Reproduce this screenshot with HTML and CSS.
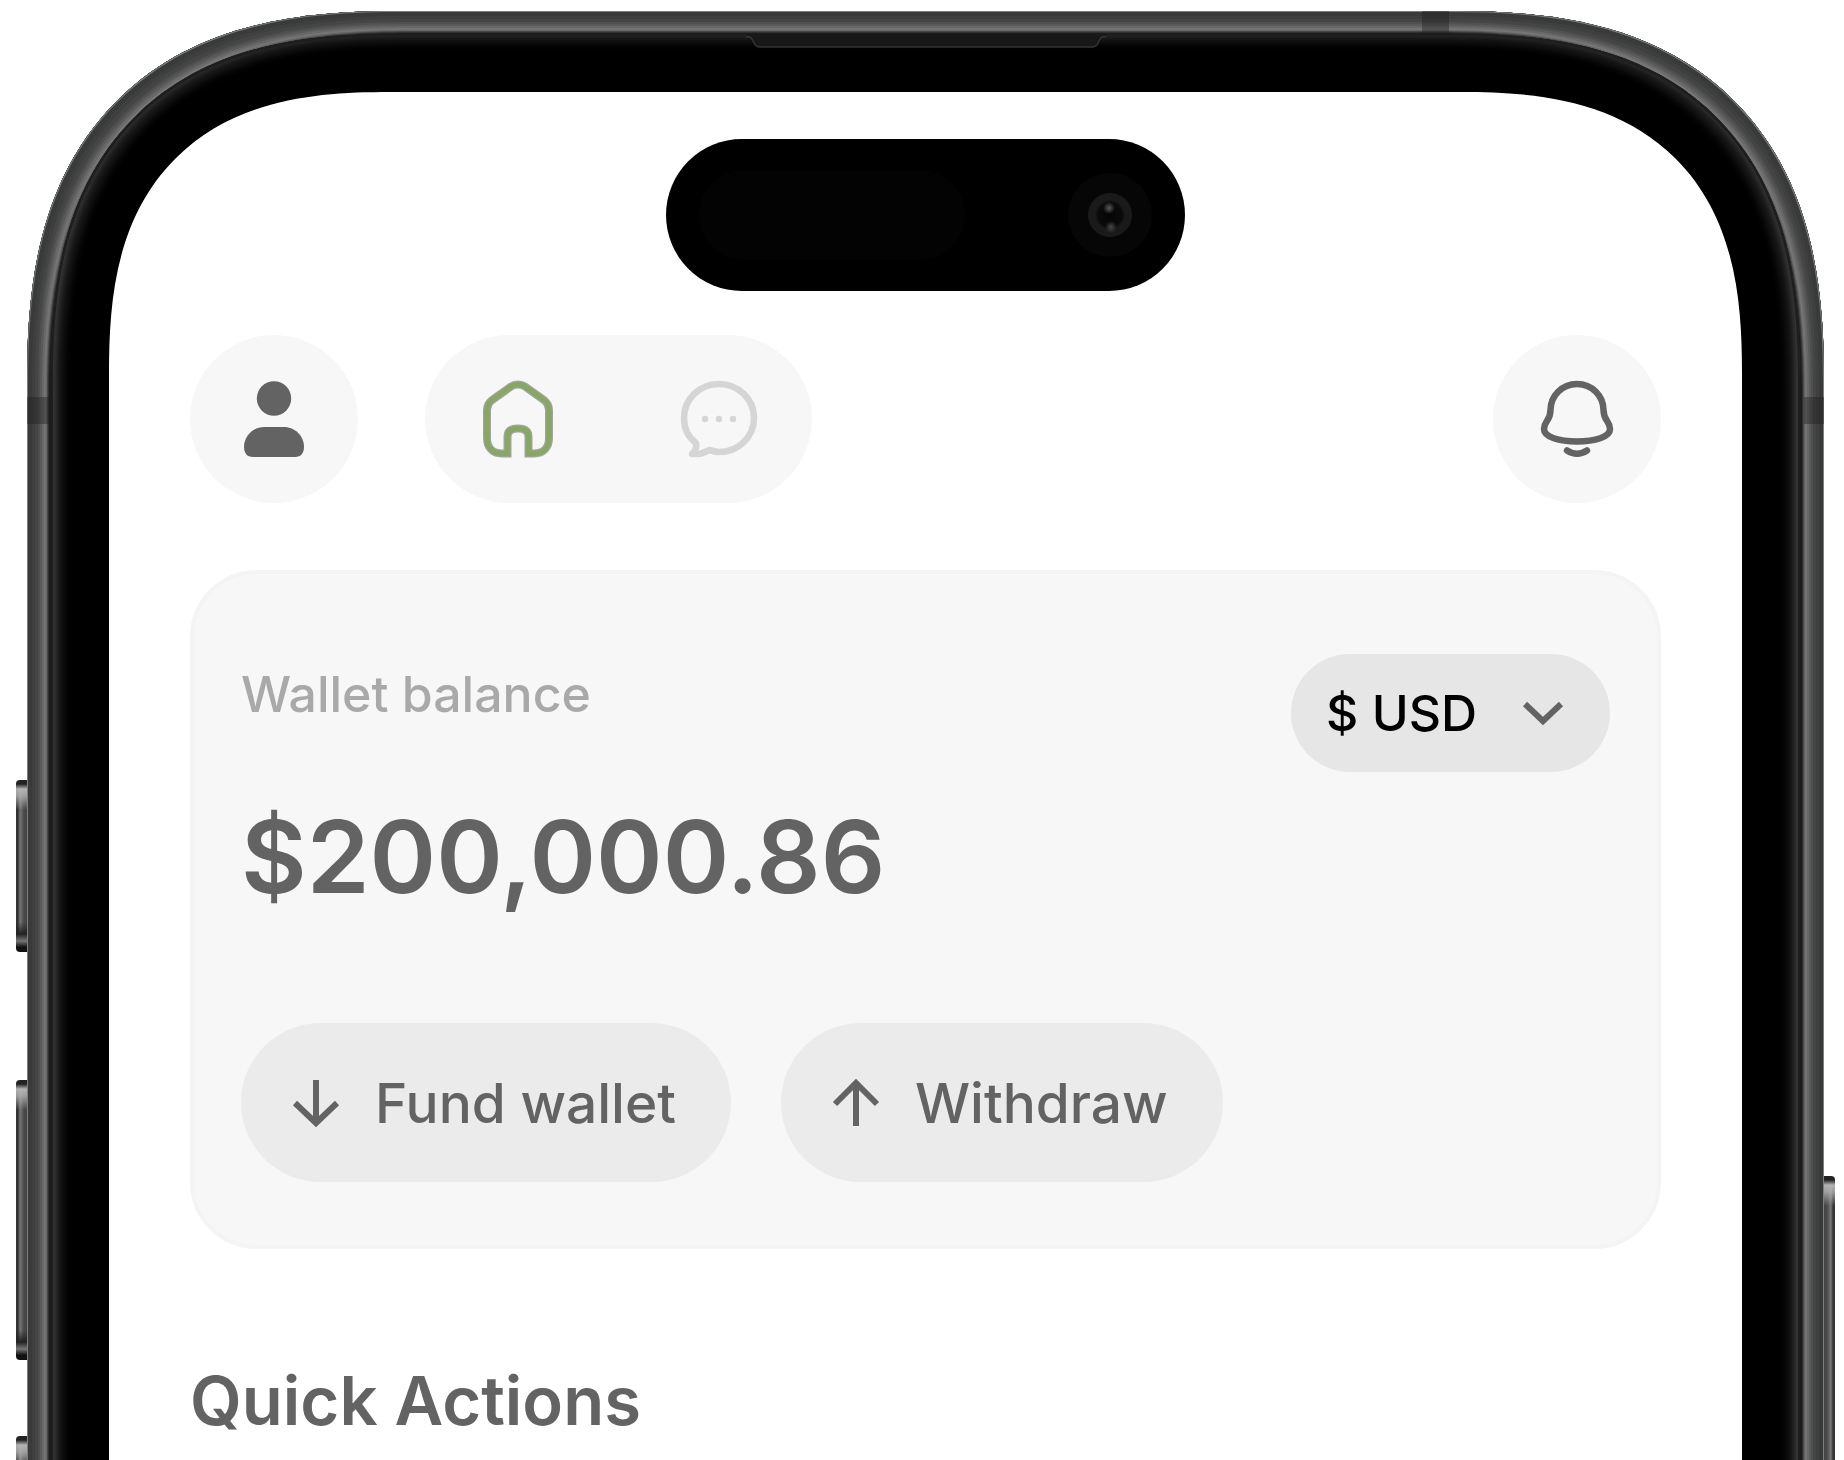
FILE: index.html
```html
<!DOCTYPE html>
<html lang="en">
<head>
  <meta charset="utf-8">
  <meta name="viewport" content="width=device-width, initial-scale=1">
  <title>Wallet</title>
  <link rel="stylesheet" href="styles.css">
</head>
<body>
  <div class="stage">
    <div class="phone">
      <span class="side-key key-action"></span>
      <span class="side-key key-volume-up"></span>
      <span class="side-key key-volume-down"></span>
      <span class="side-key key-power"></span>
      <div class="frame">
        <span class="band band-top"></span>
        <span class="band band-left"></span>
        <span class="band band-right"></span>
        <div class="bezel">
          <svg class="earpiece" viewBox="0 0 360 14" aria-hidden="true">
            <path d="M0 0H360V2C354 2 354 5 352 9Q350 13 346 13H14Q10 13 8 9C6 5 6 2 0 2Z" fill="#181818"/>
            <path d="M0 2.500C6 2.500 6 5 8 9Q10 13 14 13H346Q350 13 352 9C354 5 354 2.500 360 2.500" fill="none" stroke="#343434" stroke-width="1.500"/>
          </svg>
          <div class="screen">
            <div class="island">
              <span class="sensor"></span>
              <span class="camera"><span class="lens"></span></span>
            </div>
            <header class="topbar">
              <button class="round" type="button" aria-label="Profile">
                <svg class="icon" viewBox="0 0 80 80" fill="#636363">
                  <circle cx="40" cy="19.500" r="17.200"/>
                  <path d="M10 68C10 57 19 48 30 48H50C61 48 70 57 70 68C70 74 67 78 61 78H19C13 78 10 74 10 68Z"/>
                </svg>
              </button>
              <nav class="tabs" aria-label="Main">
                <a href="#home" aria-label="Home" aria-current="page">
                  <svg class="icon" viewBox="0 0 80 80" fill="none">
                    <path stroke="#a3a3a3" stroke-width="8" d="M29.500 74.500H24C15 74.500 9 69 9 59V31C9 27 10.500 24 13.500 21.500L33 7.500C37 4.700 43 4.700 47 7.500L66.500 21.500C69.500 24 71 27 71 31V59C71 69 65 74.500 56 74.500H50.500V58C50.500 52 47 49.500 40 49.500C33 49.500 29.500 52 29.500 58Z"/>
                    <path stroke="#87a862" stroke-width="5.500" d="M29.500 74.500H24C15 74.500 9 69 9 59V31C9 27 10.500 24 13.500 21.500L33 7.500C37 4.700 43 4.700 47 7.500L66.500 21.500C69.500 24 71 27 71 31V59C71 69 65 74.500 56 74.500H50.500V58C50.500 52 47 49.500 40 49.500C33 49.500 29.500 52 29.500 58Z"/>
                  </svg>
                </a>
                <a href="#messages" aria-label="Messages">
                  <svg class="icon" viewBox="0 0 80 80" fill="none">
                    <path stroke="#d5d5d5" stroke-width="6.500" stroke-linejoin="round" d="M40 5C59.500 5 75 20 75 39C75 58 59.500 73 40 73C36.500 73 34 72 31 71C27 72 24 75 19 75H13C16 72 18 68 17 64C9 58 5 49 5 39C5 20 20.500 5 40 5Z"/>
                    <g fill="#d5d5d5"><circle cx="26" cy="40" r="3.200"/><circle cx="40" cy="40" r="3.200"/><circle cx="54" cy="40" r="3.200"/></g>
                  </svg>
                </a>
              </nav>
              <button class="round alerts" type="button" aria-label="Notifications">
                <svg class="icon" viewBox="0 0 80 80" fill="none" stroke="#636363" stroke-width="6.500" stroke-linecap="round">
                  <path d="M40 5C25 5 13.500 17 13.500 31C13.500 42 7 42 7 50C7 58 22 62.500 40 62.500C58 62.500 73 58 73 50C73 42 66.500 42 66.500 31C66.500 17 55 5 40 5Z"/>
                  <path d="M30 71.500Q40 78 50 71.500"/>
                </svg>
              </button>
            </header>
            <main>
              <section class="card">
                <div class="card-top">
                  <div class="balance">
                    <p class="label">Wallet balance</p>
                    <p class="amount">$200,000.86</p>
                  </div>
                  <div class="currency">
                    <select aria-label="Currency"><option>$ USD</option></select>
                    <svg class="chevron" viewBox="0 0 46 30" fill="none" stroke="#636363" stroke-width="6" aria-hidden="true"><path d="M5 5L23 22L41 5"/></svg>
                  </div>
                </div>
                <div class="actions">
                  <button class="pill" type="button">
                    <svg class="arrow" viewBox="0 0 50 50" aria-hidden="true"><path d="M25 2V45M4 25L25 45L46 25"/></svg>
                    Fund wallet
                  </button>
                  <button class="pill" type="button">
                    <svg class="arrow" viewBox="0 0 50 50" aria-hidden="true"><path d="M25 48V5M4 26L25 5L46 26"/></svg>
                    Withdraw
                  </button>
                </div>
              </section>
              <h2 class="heading">Quick Actions</h2>
            </main>
          </div>
        </div>
      </div>
    </div>
  </div>
</body>
</html>
```
FILE: styles.css
```css
* { box-sizing: border-box; }

body {
  margin: 0;
  background: #fff;
  color: #636363;
  font-family: Inter, "Liberation Sans", sans-serif;
}

button, select { font: inherit; color: inherit; border: 0; }
p, h2 { margin: 0; }
svg { display: block; flex: none; }

/* The device runs on past the lower edge of the window. */
.stage {
  display: flex;
  flex-direction: column;
  min-height: 100vh;
  padding: 11px 20px 0 27px;
  overflow: hidden;
}

.phone {
  position: relative;
  display: flex;
  flex: 1 0 auto;
  flex-direction: column;
  margin-bottom: -120px;
}

.frame, .bezel, .screen { display: flex; flex: 1 0 auto; flex-direction: column; }

/* Metal rim, shaded ring by ring from the outside in */
.frame {
  position: relative;
  padding: 23px 24px 0;
  border-radius: 307px 307px 0 0;
  overflow: hidden;
  background: #1c1c1c;
  box-shadow:
    inset 0 0 0 1px #7c7d7d,
    inset 0 0 0 5px #393a3a,
    inset 0 0 0 8px #3e3f3f,
    inset 0 0 0 11px #454545,
    inset 0 0 0 13px #4f4f4f,
    inset 0 0 0 15px #5a5a5a,
    inset 0 0 0 17px #686868,
    inset 0 0 0 19px #747474,
    inset 0 0 0 20px #646464,
    inset 0 0 0 21px #484848,
    inset 0 0 0 22px #303030;
}

.bezel {
  position: relative;
  padding: 58px 58px 0;
  border-radius: 284px 284px 0 0;
  background: #000;
  box-shadow:
    inset 0 0 0 2px #1e1e1e,
    inset 0 -4px 5px 5px #373838,
    inset 0 -4px 8px 12px #1c1c1c;
}

.screen {
  padding: 47px 81px 160px;
  border-radius: 226px 226px 0 0;
  background: #fff;
}

@supports (corner-shape: superellipse(1.3)) {
  .frame { border-radius: 373px 373px 0 0; corner-shape: superellipse(1.33); }
  .bezel { border-radius: 346px 346px 0 0; corner-shape: superellipse(1.33); }
  .screen { border-radius: 281px 281px 0 0; corner-shape: superellipse(1.36); }
}

.band { position: absolute; background: rgba(30, 30, 30, 0.4); }
.band-top { top: 0; right: 375px; width: 27px; height: 23px; }
.band-left { top: 386px; left: 0; width: 22px; height: 27px; }
.band-right { top: 386px; right: 0; width: 20px; height: 27px; }

.side-key {
  position: absolute;
  left: -11px;
  width: 16px;
  border-radius: 4px 0 0 4px;
  background:
    linear-gradient(#222 0, #222 4px, rgba(190, 190, 190, 0.9) 9px, rgba(180, 180, 180, 0.8) 16px, rgba(90, 90, 90, 0) 30px, rgba(30, 30, 30, 0) calc(100% - 30px), #222 calc(100% - 18px), #777 calc(100% - 11px), #111 calc(100% - 5px)),
    linear-gradient(90deg, #333 0, #333 2px, #777 4px, #4a4a4a 8px, #383838);
}
.key-action { top: 769px; height: 172px; }
.key-volume-up { top: 1069px; height: 280px; }
.key-volume-down { top: 1425px; height: 280px; }
.key-power { top: 1165px; right: -11px; left: auto; height: 420px; transform: scaleX(-1); }

.earpiece {
  position: absolute;
  top: 0;
  left: 50%;
  width: 360px;
  height: 14px;
  margin-left: -180px;
}

.island {
  display: flex;
  align-items: center;
  align-self: center;
  justify-content: space-between;
  width: 519px;
  height: 152px;
  padding: 0 33px;
  border-radius: 76px;
  background: #000;
}
.sensor { width: 266px; height: 90px; border-radius: 45px; background: #030303; }
.camera {
  display: grid;
  place-items: center;
  width: 84px;
  height: 84px;
  border-radius: 50%;
  background: #060606;
}
.lens {
  width: 44px;
  height: 44px;
  border-radius: 50%;
  background:
    radial-gradient(circle at 21px 15px, #5a5a5a 0, transparent 6px),
    radial-gradient(circle at 23px 34px, #484848 0, transparent 6px),
    radial-gradient(circle, #050505 0, #0a0a0a 12px, #1a1a1a 15px);
}

.topbar { display: flex; gap: 67px; margin-top: 44px; }
.round {
  display: grid;
  place-items: center;
  width: 168px;
  height: 168px;
  padding: 0;
  border-radius: 50%;
  background: #f7f7f7;
}
.alerts { margin-left: auto; }
.tabs {
  display: flex;
  align-items: center;
  gap: 121px;
  padding: 0 53px;
  border-radius: 84px;
  background: #f7f7f7;
}
.icon { width: 80px; height: 80px; }

.card {
  margin-top: 67px;
  padding: 80px 47px 63px;
  border: 4px solid #f4f4f4;
  border-radius: 67px;
  background: #f7f7f7;
}
.card-top { display: flex; align-items: flex-start; justify-content: space-between; }
.balance { padding-top: 10px; }
.label { color: #a9a9a9; font-size: 50px; font-weight: 500; line-height: 60px; }
.amount { margin-top: 72px; font-size: 101px; font-weight: 600; line-height: 120px; }

.currency { position: relative; }
.currency select {
  width: 319px;
  height: 118px;
  padding: 0 100px 0 35px;
  border-radius: 59px;
  appearance: none;
  background: #e6e6e6;
  color: #000;
  font-size: 50px;
  font-weight: 500;
}
.chevron {
  position: absolute;
  top: 45px;
  right: 44px;
  width: 46px;
  height: 30px;
  pointer-events: none;
}

.actions { display: flex; gap: 50px; margin-top: 107px; }
.pill {
  display: flex;
  align-items: center;
  gap: 34px;
  height: 159px;
  padding: 0 55px 0 50px;
  border-radius: 80px;
  background: #ebebeb;
  font-size: 55px;
  font-weight: 500;
}
.arrow { width: 50px; height: 50px; fill: none; stroke: #636363; stroke-width: 6; }

.heading { margin-top: 112px; font-size: 67px; font-weight: 600; line-height: 80px; }
```
